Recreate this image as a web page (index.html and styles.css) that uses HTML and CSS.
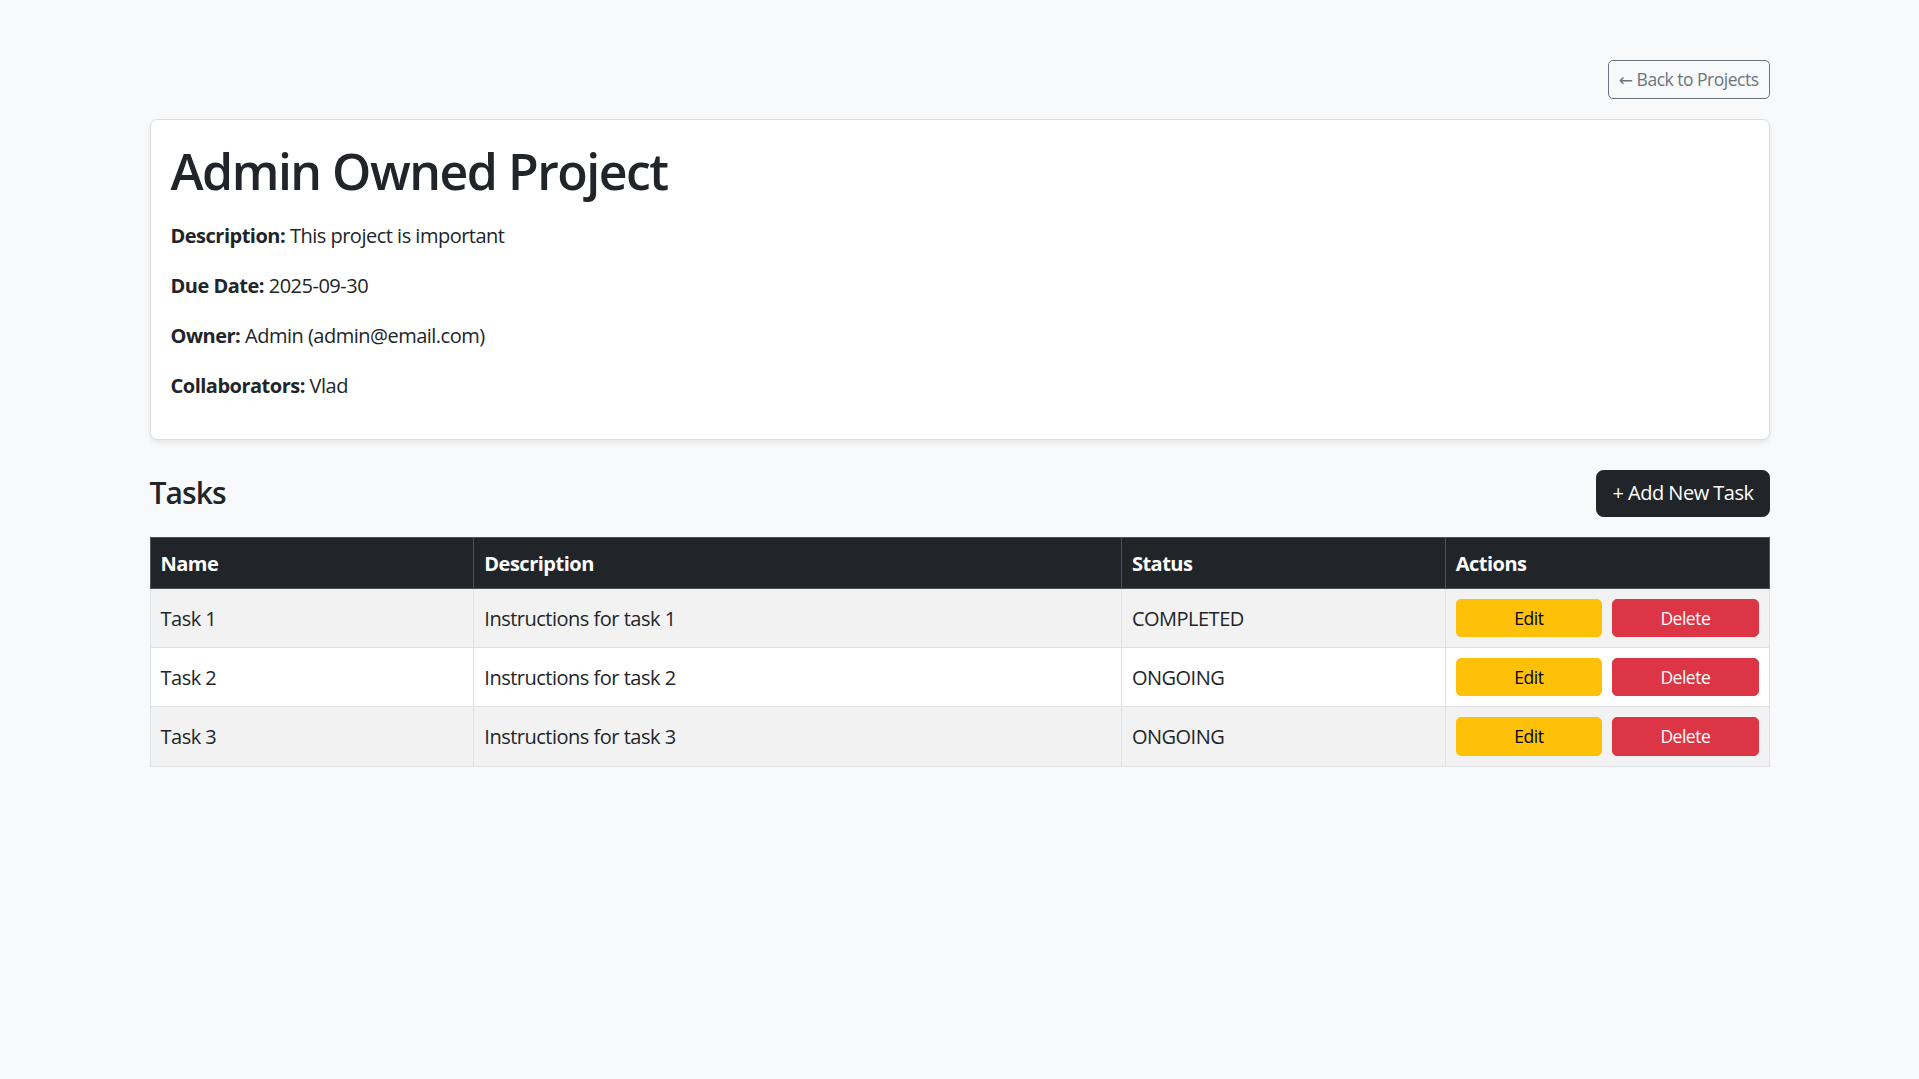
FILE: index.html
```html
<!DOCTYPE html>
<html lang="en">
<head>
<meta charset="utf-8">
<title>Admin Owned Project</title>
<link rel="stylesheet" href="styles.css">
</head>
<body>
<div class="container">
  <div class="topbar">
    <a class="btn btn-back" href="#"><span class="arrow">←</span> Back to Projects</a>
  </div>

  <div class="card">
    <div class="card-body">
      <h1 class="title">Admin Owned Project</h1>
      <p><strong>Description:</strong> This project is important</p>
      <p><strong>Due Date:</strong> 2025-09-30</p>
      <p><strong>Owner:</strong> Admin (admin@email.com)</p>
      <p><strong>Collaborators:</strong> Vlad</p>
    </div>
  </div>

  <div class="tasks-head">
    <h4 class="tasks-title">Tasks</h4>
    <a class="btn btn-add" href="#">+ Add New Task</a>
  </div>

  <table class="tasks">
    <colgroup>
      <col class="c-name"><col class="c-desc"><col class="c-status"><col class="c-actions">
    </colgroup>
    <thead>
      <tr><th>Name</th><th>Description</th><th>Status</th><th>Actions</th></tr>
    </thead>
    <tbody>
      <tr class="odd">
        <td>Task 1</td><td>Instructions for task 1</td><td>COMPLETED</td>
        <td><div class="actions"><a class="btn btn-sm btn-edit" href="#">Edit</a><button class="btn btn-sm btn-delete">Delete</button></div></td>
      </tr>
      <tr>
        <td>Task 2</td><td>Instructions for task 2</td><td>ONGOING</td>
        <td><div class="actions"><a class="btn btn-sm btn-edit" href="#">Edit</a><button class="btn btn-sm btn-delete">Delete</button></div></td>
      </tr>
      <tr class="odd">
        <td>Task 3</td><td>Instructions for task 3</td><td>ONGOING</td>
        <td><div class="actions"><a class="btn btn-sm btn-edit" href="#">Edit</a><button class="btn btn-sm btn-delete">Delete</button></div></td>
      </tr>
    </tbody>
  </table>
</div>
</body>
</html>
```

FILE: styles.css
```css
* { box-sizing: border-box; }

html, body {
  margin: 0;
  padding: 0;
}

body {
  background: #f8f9fa;
  color: #212529;
  font-family: "Open Sans", "Noto Sans", sans-serif;
  font-size: 20px;
  line-height: 1.5;
  letter-spacing: -0.025em;
}

.container {
  width: 1620px;
  margin: 60px auto 0;
}

.topbar {
  display: flex;
  justify-content: flex-end;
  margin-bottom: 20px;
}

.btn {
  display: inline-block;
  text-decoration: none;
  font-family: inherit;
  letter-spacing: inherit;
  text-align: center;
  cursor: pointer;
  border: 1.25px solid transparent;
  font-size: 20px;
  line-height: 1.5;
  padding: 7.5px 15px;
  border-radius: 7.5px;
  font-weight: 400;
}

.btn-sm {
  font-size: 17.5px;
  padding: 5px 10px;
  border-radius: 5px;
}

.btn-back {
  font-size: 17.5px;
  height: 38.75px;
  padding: 5px 10px;
  border-radius: 5px;
  color: #6c757d;
  border-color: #6c757d;
  background: transparent;
}

.btn-back .arrow {
  font-family: "DejaVu Sans", sans-serif;
  font-size: 17px;
  line-height: 1;
}

.card {
  background: #fff;
  border: 1px solid #dcdddf;
  border-radius: 7.5px;
  box-shadow: 0 2.5px 5px rgba(0, 0, 0, 0.075);
  margin-bottom: 30px;
}

.card-body {
  padding: 21px 20px 18px;
}

.title {
  font-size: 50px;
  font-weight: 600;
  line-height: 1.2;
  margin: 0 0 20px;
  letter-spacing: -0.03em;
}

.card-body p {
  margin: 0 0 20px;
}

.card-body strong {
  font-weight: 700;
}

.tasks-head {
  display: flex;
  justify-content: space-between;
  align-items: center;
  margin-bottom: 20px;
}

.tasks-title {
  font-size: 30px;
  font-weight: 600;
  line-height: 1.2;
  margin: 0;
  letter-spacing: -0.03em;
}

.btn-add {
  background: #212529;
  border-color: #212529;
  color: #fff;
}

.tasks {
  width: 100%;
  border-collapse: collapse;
  table-layout: fixed;
  border: 1px solid #dee2e6;
}

.c-name, .c-status, .c-actions { width: 20%; }
.c-desc { width: 40%; }

.tasks th,
.tasks td {
  padding: 11px 10px 9px;
  text-align: left;
  vertical-align: middle;
  border: 1px solid #dee2e6;
}

.tasks th {
  background: #212529;
  color: #fff;
  font-weight: 700;
  border-color: #4d5154;
}

.tasks td {
  background: #fff;
}

.tasks tr.odd td {
  background: #f2f2f2;
}

.tasks td:last-child {
  padding: 10px;
}

.actions {
  display: flex;
  gap: 10px;
}

.actions .btn {
  flex: 1 1 0;
}

.btn-edit {
  background: #ffc107;
  border-color: #ffc107;
  color: #000;
}

.btn-delete {
  background: #dc3545;
  border-color: #dc3545;
  color: #fff;
}
```
